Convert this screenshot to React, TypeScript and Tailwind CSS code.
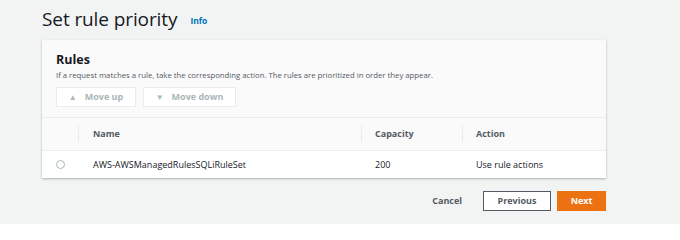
import { useState } from "react";

type TRule = {
  name: string;
  capacity: number;
  action: string;
};

const rules: TRule[] = [
  { name: "AWS-AWSManagedRulesSQLiRuleSet", capacity: 200, action: "Use rule actions" },
];

const App = () => {
  const [selected, setSelected] = useState<string | null>(null);

  return (
    <div
      className="min-h-[224px] w-[680px] bg-[#f2f3f3] px-[42px] pt-[5px] text-[#16191f]"
      style={{ fontFamily: '"Open Sans", "Noto Sans", Arial, sans-serif' }}
    >
      <div className="flex h-[28px] items-center">
        <h1 className="text-[19px] leading-none tracking-[-0.1px] text-[#16191f]">Set rule priority</h1>
        <span className="ml-[13px] mt-[4px] text-[8.5px] font-bold text-[#0073bb]">Info</span>
      </div>

      <div className="mt-[7px] w-[564px] bg-white shadow-[0_1px_2px_rgba(0,28,36,0.3)]">
        <div className="bg-[#fafafa] px-[14px] pb-[10px] pt-[12px]">
          <h2 className="text-[12.5px] font-bold leading-[16px]">Rules</h2>
          <p className="mt-[2px] text-[7.75px] leading-[10px] text-[#545b64]">
            If a request matches a rule, take the corresponding action. The rules are prioritized in order they appear.
          </p>
          <div className="mt-[7px] flex gap-[7px]">
            <button
              disabled
              className="flex h-[20px] w-[80px] items-center justify-center gap-[8px] border border-[#eaeded] bg-white text-[9px] font-bold text-[#aab7b8]"
            >
              <span className="text-[8px] leading-none">▲</span>
              Move up
            </button>
            <button
              disabled
              className="flex h-[20px] w-[93px] items-center justify-center gap-[8px] border border-[#eaeded] bg-white text-[9px] font-bold text-[#aab7b8]"
            >
              <span className="text-[8px] leading-none">▼</span>
              Move down
            </button>
          </div>
        </div>

        <table className="w-full table-fixed border-collapse text-left">
          <colgroup>
            <col className="w-[37px]" />
            <col className="w-[283px]" />
            <col className="w-[101px]" />
            <col />
          </colgroup>
          <thead>
            <tr className="h-[33px] border-t border-[#eaeded] bg-[#fafafa] text-[9px] font-bold text-[#545b64]">
              <th className="p-0">
                <div className="h-[16px] border-r border-[#eaeded]" />
              </th>
              <th className="pl-[14px] pr-0 font-bold">
                <div className="border-r border-[#eaeded] leading-[16px]">Name</div>
              </th>
              <th className="pl-[13px] pr-0 font-bold">
                <div className="border-r border-[#eaeded] leading-[16px]">Capacity</div>
              </th>
              <th className="pl-[13px] font-bold">Action</th>
            </tr>
          </thead>
          <tbody>
            {rules.map((rule) => (
              <tr
                key={rule.name}
                className="h-[27px] cursor-pointer border-t border-[#eaeded] text-[9px]"
                onClick={() => setSelected(rule.name)}
              >
                <td className="p-0">
                  <div className="ml-[14px] flex h-[9px] w-[9px] items-center justify-center rounded-full border border-[#aab7b8] bg-white">
                    {selected === rule.name && <div className="h-[3px] w-[3px] rounded-full bg-[#0073bb]" />}
                  </div>
                </td>
                <td className="px-[14px]">{rule.name}</td>
                <td className="pl-[13px]">{rule.capacity}</td>
                <td className="pl-[13px]">{rule.action}</td>
              </tr>
            ))}
          </tbody>
        </table>
      </div>

      <div className="mt-[13px] flex w-[564px] items-center justify-end">
        <button className="mr-[21px] text-[9px] font-bold text-[#545b64]">Cancel</button>
        <button className="h-[20px] w-[68px] border border-[#545b64] bg-white text-[9px] font-bold text-[#545b64]">
          Previous
        </button>
        <button className="ml-[6px] h-[20px] w-[49px] bg-[#ec7211] text-[9px] font-bold text-white">Next</button>
      </div>
    </div>
  );
};

export default App;
